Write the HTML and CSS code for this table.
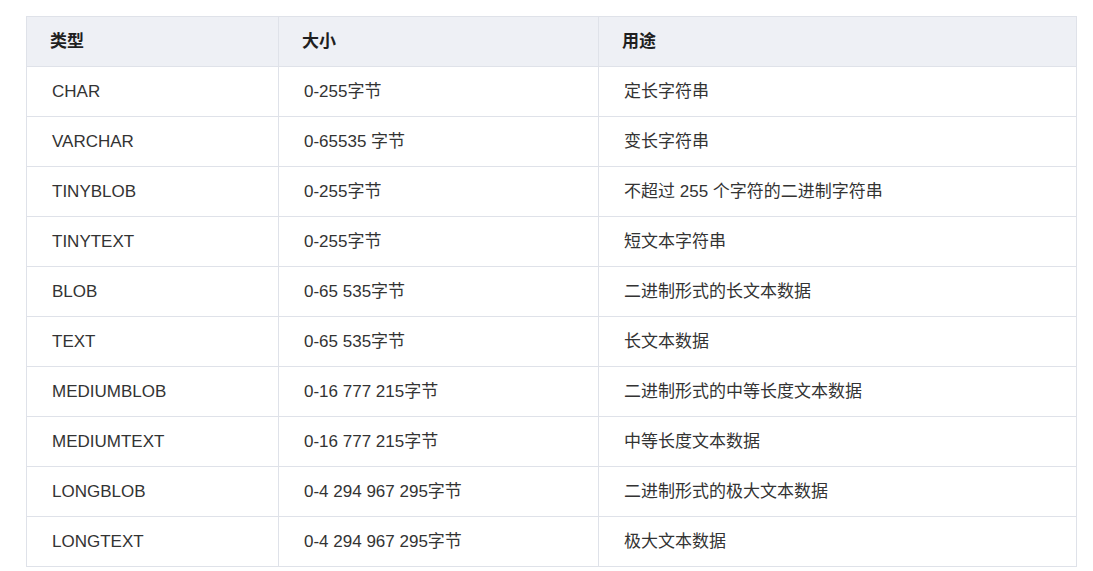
FILE: index.html
```html
<!DOCTYPE html>
<html lang="zh-CN">
<head>
<meta charset="utf-8">
<title>类型</title>
<link rel="stylesheet" href="styles.css">
</head>
<body>
<div class="page">
<table class="types">
<colgroup><col class="c1"><col class="c2"><col class="c3"></colgroup>
<thead>
<tr><th>类型</th><th>大小</th><th>用途</th></tr>
</thead>
<tbody>
<tr><td>CHAR</td><td>0-255字节</td><td>定长字符串</td></tr>
<tr><td>VARCHAR</td><td>0-65535 字节</td><td>变长字符串</td></tr>
<tr><td>TINYBLOB</td><td>0-255字节</td><td>不超过 255 个字符的二进制字符串</td></tr>
<tr><td>TINYTEXT</td><td>0-255字节</td><td>短文本字符串</td></tr>
<tr><td>BLOB</td><td>0-65 535字节</td><td>二进制形式的长文本数据</td></tr>
<tr><td>TEXT</td><td>0-65 535字节</td><td>长文本数据</td></tr>
<tr><td>MEDIUMBLOB</td><td>0-16 777 215字节</td><td>二进制形式的中等长度文本数据</td></tr>
<tr><td>MEDIUMTEXT</td><td>0-16 777 215字节</td><td>中等长度文本数据</td></tr>
<tr><td>LONGBLOB</td><td>0-4 294 967 295字节</td><td>二进制形式的极大文本数据</td></tr>
<tr><td>LONGTEXT</td><td>0-4 294 967 295字节</td><td>极大文本数据</td></tr>
</tbody>
</table>
</div>
</body>
</html>
```
FILE: styles.css
```css
html, body {
  margin: 0;
  padding: 0;
  background: #ffffff;
}
.page {
  padding: 16px 0 0 26px;
}
.types {
  border-collapse: collapse;
  table-layout: fixed;
  width: 1050px;
  font-family: "Liberation Sans", "Noto Sans CJK SC", sans-serif;
  font-size: 17px;
  color: #333333;
}
.c1 { width: 252px; }
.c2 { width: 320px; }
.c3 { width: 478px; }
.types th,
.types td {
  border: 1px solid #dfe2e9;
  height: 49px;
  padding: 0 0 0 25px;
  text-align: left;
  vertical-align: middle;
  line-height: 20px;
  white-space: nowrap;
}
.types th {
  background: #eef0f5;
  font-weight: bold;
  color: #1f1f1f;
  padding-left: 23px;
}
```
